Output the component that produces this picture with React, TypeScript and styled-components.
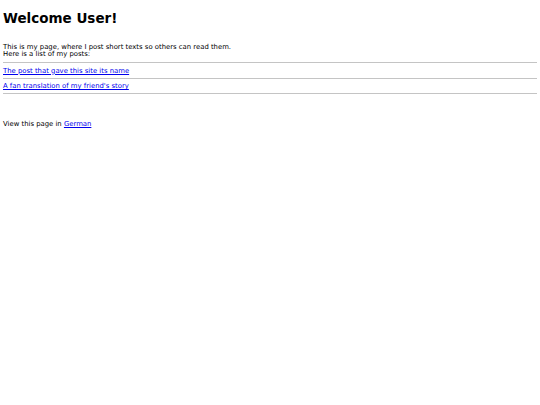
import React from "react";
import styled, { createGlobalStyle } from "styled-components";

const Global = createGlobalStyle`
  html, body { margin: 0; padding: 0; background: #fff; }
  body { font-family: "DejaVu Sans", Verdana, sans-serif; font-size: 6.86px; color: #000; }
`;

const Page = styled.div`
  padding: 10px 3px 0;
`;

const Title = styled.h1`
  font-size: 13.5px;
  font-weight: bold;
  margin: 0 0 17.5px;
  line-height: 16px;
`;

const Intro = styled.p`
  margin: 0 0 4.5px;
  line-height: 7px;
`;

const PostList = styled.div`
  display: flex;
  flex-direction: column;
`;

const Rule = styled.hr`
  border: none;
  border-top: 1px solid #c4c4c4;
  margin: 0;
`;

const PostRow = styled.div`
  padding: 3.5px 0 3px;
  line-height: 8px;
`;

const Link = styled.a`
  color: #00e;
  text-decoration: underline;
`;

const Footer = styled.p`
  margin: 26px 0 0;
  line-height: 8px;
`;

export default function App() {
  const posts = ["The post that gave this site its name", "A fan translation of my friend's story"];
  return (
    <>
      <Global />
      <Page>
        <Title>Welcome User!</Title>
        <Intro>
          This is my page, where I post short texts so others can read them.
          <br />
          Here is a list of my posts:
        </Intro>
        <PostList>
          <Rule />
          {posts.map((p) => (
            <React.Fragment key={p}>
              <PostRow>
                <Link href="#">{p}</Link>
              </PostRow>
              <Rule />
            </React.Fragment>
          ))}
        </PostList>
        <Footer>
          View this page in <Link href="#">German</Link>
        </Footer>
      </Page>
    </>
  );
}
